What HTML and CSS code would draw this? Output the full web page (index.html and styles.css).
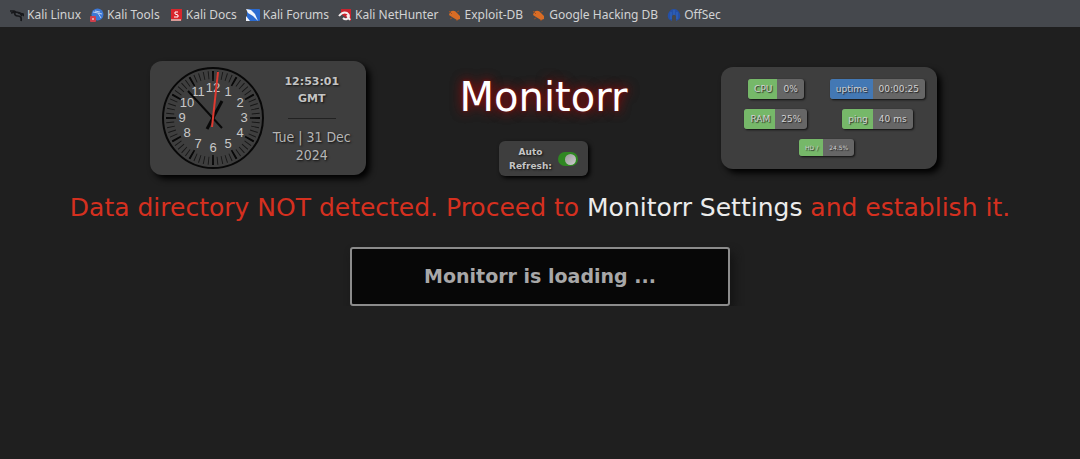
FILE: index.html
```html
<!DOCTYPE html>
<html lang="en">
<head>
<meta charset="utf-8">
<meta name="viewport" content="width=device-width, initial-scale=1">
<title>Monitorr</title>
<link rel="stylesheet" href="styles.css">
</head>
<body>
<nav class="bookmarks" aria-label="Bookmarks">
  <a class="bookmark" href="#"><svg class="icon" viewBox="0 0 14 14" fill="none" stroke="#17181b"><path d="M0 3h4l2 1 4 1 2 3M1 5l5-1M5 4q-1 4 3 4t3 5M8 5l5 1 1 2" stroke-width="1.7"/></svg>Kali Linux</a>
  <a class="bookmark" href="#"><svg class="icon" viewBox="0 0 14 14"><circle cx="7.500" cy="6.500" r="6" fill="#3d78d6"/><path d="M3 4l5 1 3 5M8 5l4 1M5 3l5 1" stroke="#b9cff2" fill="none"/><rect x="0" y="8" width="6" height="6" rx="1" fill="#cf3f4c"/><path d="M2 11h2" stroke="#fff"/></svg>Kali Tools</a>
  <a class="bookmark" href="#"><svg class="icon" viewBox="0 0 14 14"><path d="M2 1h11v10l-1 2H2z" fill="#d8262c"/><path d="M2 11h10v2H2z" fill="#d99a96"/><path d="M9 4H6v2l3 1v2H5" stroke="#fff" fill="none"/></svg>Kali Docs</a>
  <a class="bookmark" href="#"><svg class="icon" viewBox="0 0 14 14"><rect x="1" y="1" width="13" height="12" rx="1" fill="#2b6bd0"/><path d="M0 1l5 1 4 4 3 7-5-5-5-3zM0 8l4 5H0z" fill="#f1f5fc"/></svg>Kali Forums</a>
  <a class="bookmark" href="#"><svg class="icon" viewBox="0 0 14 14"><path d="M3 1h10v12L3 6z" fill="#c9222e"/><path d="M1 8q4-5 8-3 4 3 0 6-2 1-4-1M9 7l3 5" fill="none" stroke="#f5eeee" stroke-width="2"/></svg>Kali NetHunter</a>
  <a class="bookmark" href="#"><svg class="icon" viewBox="0 0 14 14"><path d="M2 4q4-3 7 1l3 3v3l-3 1-5-3-3-2z" fill="#d96c25"/><path d="M1 3l3 3M4 10l-2 1M9 4l2-1M9 12v1" stroke="#9c4e22"/></svg>Exploit-DB</a>
  <a class="bookmark" href="#"><svg class="icon" viewBox="0 0 14 14"><path d="M2 4q4-3 7 1l3 3v3l-3 1-5-3-3-2z" fill="#d96c25"/><path d="M1 3l3 3M4 10l-2 1M9 4l2-1M9 12v1" stroke="#9c4e22"/></svg>Google Hacking DB</a>
  <a class="bookmark" href="#"><svg class="icon" viewBox="0 0 14 14"><path d="M3 12Q0 10 1 6 3 1 7 1t6 5q1 4-2 6L9 13V8q-2-3-4 0v5z" fill="#2450a8"/><path d="M7 2v5M4 4v7M10 4v7" stroke="#3569bd"/></svg>OffSec</a>
</nav>
<main>
  <header class="top">
    <section class="card clock-card" aria-label="Clock">
      <svg class="clock" viewBox="-51 -51 102 102" role="img" aria-label="Analog clock">
        <circle class="rim" r="50"/>
        <circle class="minutes" r="43" pathLength="600"/>
        <circle class="hours" r="42" pathLength="600"/>
        <g class="numerals">
          <text x="15" y="-22">1</text><text x="27" y="-11">2</text><text x="31" y="4">3</text>
          <text x="27" y="19">4</text><text x="15" y="30">5</text><text x="0" y="34">6</text>
          <text x="-15" y="30">7</text><text x="-26" y="19">8</text><text x="-31" y="4">9</text>
          <text x="-26" y="-11">10</text><text x="-15" y="-22">11</text><text x="0" y="-26">12</text>
        </g>
        <path class="hand-hour" d="M-6 11L9-17"/>
        <path class="hand-minute" d="M9 10L-25-27"/>
        <path class="hand-second" d="M-1 9L5-46"/>
      </svg>
      <div class="datetime">
        <div class="time">12:53:01<br>GMT</div>
        <hr class="rule">
        <div class="date">Tue | 31 Dec<br>2024</div>
      </div>
    </section>
    <div class="brand">
      <h1 class="title">Monitorr</h1>
      <label class="card refresh"><span>Auto<br>Refresh:</span><input class="switch" type="checkbox" checked></label>
    </div>
    <section class="card stats" aria-label="System stats">
      <div class="badge"><span class="key">CPU</span><span class="value">0%</span></div>
      <div class="badge"><span class="key blue">uptime</span><span class="value">00:00:25</span></div>
      <div class="badge"><span class="key">RAM</span><span class="value">25%</span></div>
      <div class="badge"><span class="key">ping</span><span class="value">40 ms</span></div>
      <div class="badge small"><span class="key">HD /</span><span class="value">24.5%</span></div>
    </section>
  </header>
  <p class="warning">Data directory NOT detected. Proceed to <a href="#">Monitorr Settings</a> and establish it.</p>
  <div class="loading" role="status">Monitorr is loading ...</div>
</main>
</body>
</html>
```
FILE: styles.css
```css
* { box-sizing: border-box; }

body {
  margin: 0;
  background: #1f1f1f;
  color: #c4c4c4;
  font-family: "DejaVu Sans", sans-serif;
}

.bookmarks {
  display: flex;
  align-items: center;
  gap: 9px;
  height: 27px;
  padding: 2px 10px 0;
  background: #45484d;
  white-space: nowrap;
  overflow: hidden;
}
.bookmark {
  display: flex;
  align-items: center;
  gap: 3px;
  color: #d2d3d4;
  font: 12px/16px "Noto Sans", sans-serif;
  text-decoration: none;
}
.icon { width: 14px; height: 14px; flex: none; }

.top {
  display: grid;
  grid-template-columns: repeat(3, 1fr);
  width: 80%;
  margin: 33px auto 0;
  padding-left: 7px;
  align-items: center;
  justify-items: center;
}
.card {
  background: #3e3e3e;
  border-radius: 12px;
  box-shadow: 4px 4px 6px #000;
}
.clock-card {
  display: flex;
  align-items: center;
  gap: 6px;
  width: 216px;
  padding: 6px 12px;
}
.clock { width: 102px; height: 102px; flex: none; }
.clock circle { fill: none; stroke: #080808; }
.clock .rim { stroke-width: 2; }
.clock .minutes { stroke-width: 8; stroke: #171717; stroke-dasharray: 2 8; stroke-dashoffset: 1; }
.clock .hours { stroke-width: 10; stroke-dasharray: 4 46; stroke-dashoffset: 2; }
.numerals {
  fill: #c8c8c8;
  font: 13px "Liberation Sans", sans-serif;
  text-anchor: middle;
}
.hand-hour { stroke: #090909; stroke-width: 3; }
.hand-minute { stroke: #090909; stroke-width: 2; }
.hand-second { stroke: #df3a30; stroke-width: 2; }
.datetime {
  flex: 1;
  text-align: center;
  text-shadow: 1px 1px 2px #111;
  white-space: nowrap;
}
.time { font-size: 11px; font-weight: 700; line-height: 17px; }
.rule {
  width: 48px;
  margin: 11px auto 9px;
  border: 0;
  border-top: 1px solid #222;
}
.date { font: 14px/18px "DejaVu Sans Condensed", "DejaVu Sans", sans-serif; font-stretch: condensed; color: #b5b5b5; }

.brand { display: flex; flex-direction: column; align-items: center; gap: 20px; padding-top: 13px; }
.title {
  margin: 0;
  color: #fff;
  font-size: 40px;
  font-weight: 400;
  line-height: 48px;
  text-shadow: 0 0 3px #8a1515, 0 0 12px #8f1212, 0 0 12px #5a0d0d;
}
.refresh {
  display: flex;
  align-items: center;
  gap: 6px;
  padding: 4px 10px 3px;
  border-radius: 6px;
  box-shadow: 2px 2px 4px #000;
  font-size: 9px;
  font-weight: 700;
  line-height: 14px;
  text-align: center;
  text-shadow: 1px 1px 2px #111;
}
.switch {
  appearance: none;
  display: flex;
  align-items: center;
  justify-content: flex-end;
  width: 20px;
  height: 14px;
  margin: 0;
  border-radius: 7px;
  background: #2f8722;
}
.switch::before {
  content: "";
  width: 11px;
  height: 11px;
  margin-right: 2px;
  border-radius: 50%;
  background: linear-gradient(135deg, #999, #ccc);
}

.stats {
  display: grid;
  grid-template-columns: 1fr 1fr;
  justify-items: center;
  row-gap: 10px;
  width: 216px;
  padding: 12px 9px 13px 4px;
}
.badge {
  display: flex;
  border-radius: 3px;
  overflow: hidden;
  box-shadow: 1px 1px 2px #111;
  background: #666;
  color: #d2d2d2;
  font-size: 9px;
  line-height: 20px;
  text-shadow: 1px 1px 1px #222;
  white-space: nowrap;
}
.key { padding: 0 5px 0 6px; background: #76b869; }
.key.blue { background: #4378b4; }
.value { padding: 0 6px; }
.badge.small { grid-column: 1 / -1; font-size: 6px; line-height: 17px; }

.warning {
  margin: 17px 16px 24px;
  color: #d5301f;
  font-size: 25px;
  line-height: 30px;
  text-align: center;
}
.warning a { color: #ececec; text-decoration: none; }
.loading {
  width: 380px;
  max-width: 100%;
  margin: 0 auto;
  padding: 15px;
  border: 2px solid #8b8b8b;
  border-radius: 3px;
  background: #070707;
  box-shadow: 4px 6px 10px #141414;
  color: #a8a8a8;
  font-size: 19px;
  font-weight: 700;
  line-height: 25px;
  text-align: center;
}
```
